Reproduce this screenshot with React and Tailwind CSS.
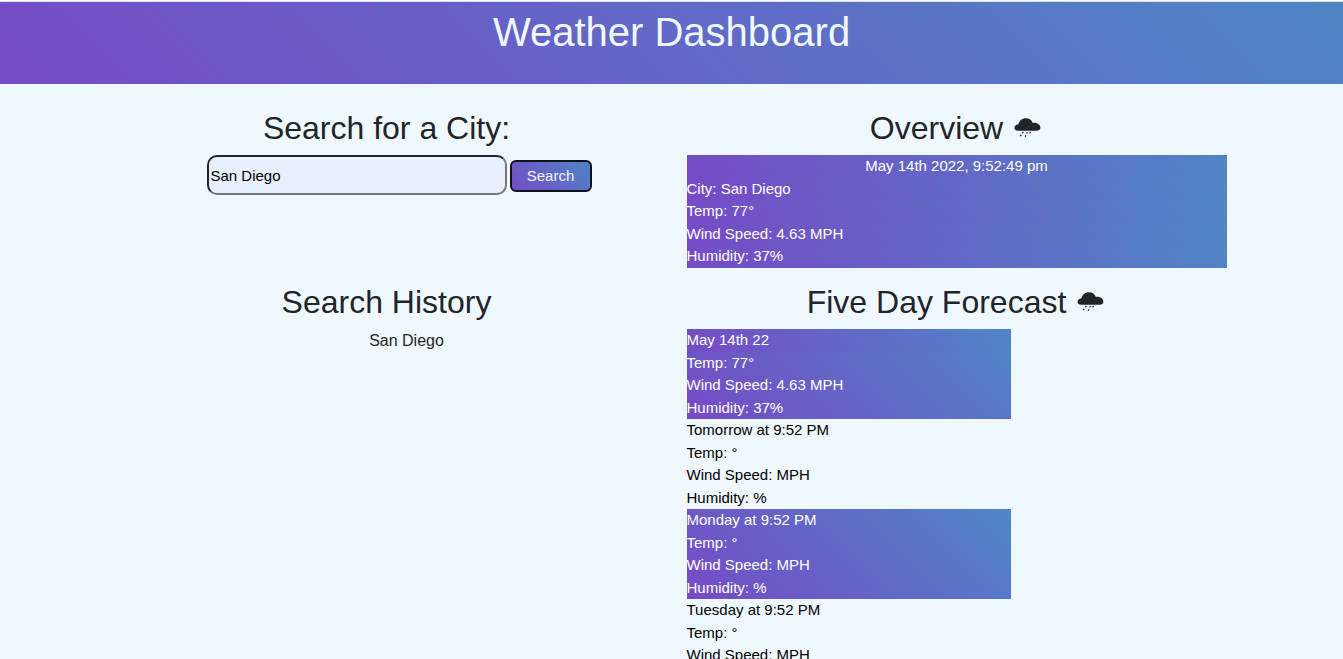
const GRADIENT = "bg-[linear-gradient(45deg,#764ac6,#4f86c6)]";

function RainCloud() {
  return (
    <svg className="mr-[2px] ml-[10px] h-[22px] w-[28px] shrink-0" viewBox="0 0 28 22" fill="#212529" aria-hidden="true">
      <path d="M5.5 13.8C2.9 13.8 1.5 12.8 1.5 10.8C1.5 8.9 3.2 7.5 5.4 7.2C6.2 3.8 9 1.2 12.8 1.2C16.4 1.2 18.9 3.2 19.8 5.9C23.8 5.6 27.4 7.5 27.4 10.8C27.4 12.9 25.8 13.8 23.4 13.8Z" />
      <g stroke="#212529" strokeWidth="1.2" strokeDasharray="1.8 1.8">
        <path d="M10.4 14.9L6.6 20" />
        <path d="M14.4 14.9L12 20" />
        <path d="M17.6 14.9L15.8 17.6" />
      </g>
    </svg>
  );
}

function Heading({ children, icon }) {
  return (
    <h2 className="mb-2 flex h-[38px] items-center justify-center text-[32px] leading-[38.4px] text-[#212529]">
      <span>{children}</span>
      {icon && <RainCloud />}
    </h2>
  );
}

const DAYS = [
  { date: "May 14th 22", temp: "77", wind: "4.63 ", humidity: "37" },
  { date: "Tomorrow at 9:52 PM", temp: "", wind: "", humidity: "" },
  { date: "Monday at 9:52 PM", temp: "", wind: "", humidity: "" },
  { date: "Tuesday at 9:52 PM", temp: "", wind: "", humidity: "" },
];

function Readings({ temp, wind, humidity, rowClass = "" }) {
  return (
    <>
      <p className={rowClass}>{`Temp: ${temp}°`}</p>
      <p className={rowClass}>{`Wind Speed: ${wind}MPH`}</p>
      <p className={rowClass}>{`Humidity: ${humidity}%`}</p>
    </>
  );
}

export default function App() {
  return (
    <div className="h-screen overflow-hidden bg-[#f0f8ff] font-['Liberation_Sans',Arial,sans-serif] text-[#212529]">
      <div className="h-[2px] border-t border-white bg-[#dcdfe8]" />
      <header className={`h-[82px] pt-[6px] text-center ${GRADIENT}`}>
        <h1 className="text-[40px] leading-[48px] text-[#f0f8ff]">Weather Dashboard</h1>
      </header>
      <main className="ml-[116.5px] grid w-[1110px] grid-cols-[540px_540px] gap-x-[30px] pt-[25px]">
        <section>
          <Heading>Search for a City:</Heading>
          <form className="ml-[90px] flex h-[40px] items-center gap-[3px]" onSubmit={(e) => e.preventDefault()}>
            <input
              type="text"
              defaultValue="San Diego"
              className="h-[40px] w-[300px] rounded-[10px] border-2 border-t-[#212529] border-r-[#767676] border-b-[#767676] border-l-[#212529] bg-[#e8f0fe] px-[2px] pt-[1px] text-[15px] text-black outline-none"
            />
            <button
              className={`mt-[2px] h-[32px] w-[82px] rounded-[6px] border-2 border-[#111118] bg-origin-border text-[15px] text-[#f0f8ff] ${GRADIENT}`}
            >
              Search
            </button>
          </form>
          <div className="mt-[88px]">
            <Heading>Search History</Heading>
            <ul className="pl-[40px] text-center text-[16px] leading-[24px]">
              <li>San Diego</li>
            </ul>
          </div>
        </section>
        <section>
          <Heading icon>Overview</Heading>
          <div className={`h-[113px] text-[15px] leading-[22.5px] text-white ${GRADIENT}`}>
            <p className={`text-center ${GRADIENT}`}>May 14th 2022, 9:52:49 pm</p>
            <p className={GRADIENT}>City: San Diego</p>
            <Readings temp="77" wind="4.63 " humidity="37" rowClass={GRADIENT} />
          </div>
          <div className="mt-[15px]">
            <Heading icon>Five Day Forecast</Heading>
            {DAYS.map((day, i) => (
              <article
                key={day.date}
                className={`h-[90px] w-[324px] text-[15px] leading-[22.5px] ${i % 2 === 0 ? `text-white ${GRADIENT}` : "text-black"}`}
              >
                <p className={i === 0 ? GRADIENT : ""}>{day.date}</p>
                <Readings {...day} />
              </article>
            ))}
          </div>
        </section>
      </main>
    </div>
  );
}
